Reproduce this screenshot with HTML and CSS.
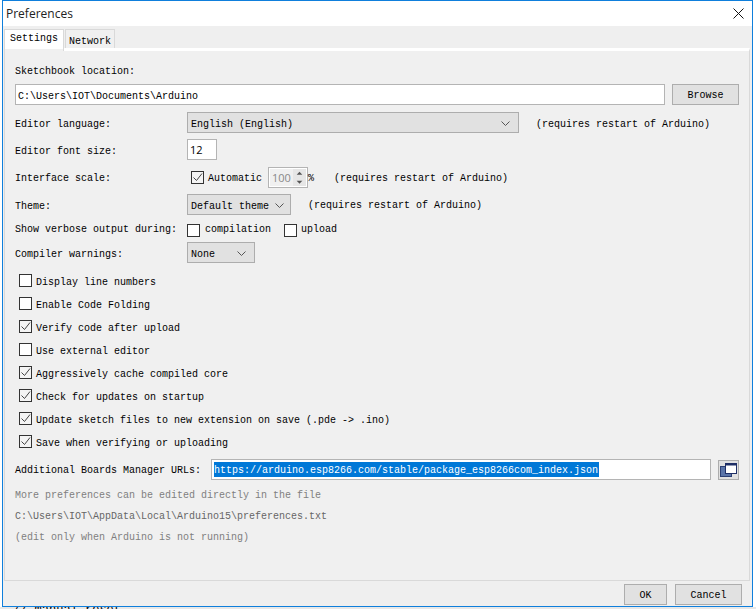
FILE: index.html
```html
<!DOCTYPE html>
<html lang="en">
<head>
<meta charset="utf-8">
<title>Preferences</title>
<link rel="stylesheet" href="styles.css">
</head>
<body>
<div class="window">
  <div class="titlebar">
    <span class="title">Preferences</span>
    <svg class="close" width="11" height="11" viewBox="0 0 11 11"><path d="M.5.5l10 10M10.500.5l-10 10" stroke="#111" stroke-width="1" fill="none"/></svg>
  </div>
  <div class="tabs">
    <div class="tab active">Settings</div>
    <div class="tab">Network</div>
  </div>
  <div class="panel">
    <div class="label sketch-label">Sketchbook location:</div>
    <div class="row sketch-row">
      <div class="field grow">C:\Users\IOT\Documents\Arduino</div>
      <div class="btn browse">Browse</div>
    </div>
    <div class="row lang-row">
      <div class="label col">Editor language:</div>
      <div class="select lang">English (English)<svg class="chev" width="9" height="5" viewBox="0 0 9 5"><path d="M.5.500l4 4 4-4" stroke="#555" fill="none"/></svg></div>
      <div class="note note-lang">(requires restart of Arduino)</div>
    </div>
    <div class="row size-row">
      <div class="label col">Editor font size:</div>
      <div class="field size">12</div>
    </div>
    <div class="row scale-row">
      <div class="label col">Interface scale:</div>
      <span class="check on scale-check"><svg width="11" height="11" viewBox="0 0 11 11"><path d="M1.500 5.500l3 3 5.500-7" stroke="#444" fill="none"/></svg></span>
      <span class="label auto">Automatic</span>
      <div class="spinner">
        <span class="spin-value">100</span>
        <span class="spin-arrows">
          <svg width="11" height="9" viewBox="0 0 11 9"><path d="M2.500 6h6l-3-3z" fill="#555"/></svg>
          <svg width="11" height="9" viewBox="0 0 11 9"><path d="M2.500 3h6l-3 3z" fill="#555"/></svg>
        </span>
      </div>
      <span class="label pct">%</span>
      <span class="note note-scale">(requires restart of Arduino)</span>
    </div>
    <div class="row theme-row">
      <div class="label col">Theme:</div>
      <div class="select theme">Default theme<svg class="chev" width="9" height="5" viewBox="0 0 9 5"><path d="M.5.500l4 4 4-4" stroke="#555" fill="none"/></svg></div>
      <div class="note note-theme">(requires restart of Arduino)</div>
    </div>
    <div class="row verbose-row">
      <div class="label col">Show verbose output during:</div>
      <span class="check"></span><span class="label comp">compilation</span>
      <span class="check"></span><span class="label upl">upload</span>
    </div>
    <div class="row warn-row">
      <div class="label col">Compiler warnings:</div>
      <div class="select warn">None<svg class="chev" width="9" height="5" viewBox="0 0 9 5"><path d="M.5.500l4 4 4-4" stroke="#555" fill="none"/></svg></div>
    </div>
    <ul class="options">
      <li><span class="check"></span><span class="opt">Display line numbers</span></li>
      <li><span class="check"></span><span class="opt">Enable Code Folding</span></li>
      <li><span class="check on"><svg width="11" height="11" viewBox="0 0 11 11"><path d="M1.500 5.500l3 3 5.500-7" stroke="#444" fill="none"/></svg></span><span class="opt">Verify code after upload</span></li>
      <li><span class="check"></span><span class="opt">Use external editor</span></li>
      <li><span class="check on"><svg width="11" height="11" viewBox="0 0 11 11"><path d="M1.500 5.500l3 3 5.500-7" stroke="#444" fill="none"/></svg></span><span class="opt">Aggressively cache compiled core</span></li>
      <li><span class="check on"><svg width="11" height="11" viewBox="0 0 11 11"><path d="M1.500 5.500l3 3 5.500-7" stroke="#444" fill="none"/></svg></span><span class="opt">Check for updates on startup</span></li>
      <li><span class="check on"><svg width="11" height="11" viewBox="0 0 11 11"><path d="M1.500 5.500l3 3 5.500-7" stroke="#444" fill="none"/></svg></span><span class="opt">Update sketch files to new extension on save (.pde -&gt; .ino)</span></li>
      <li><span class="check on"><svg width="11" height="11" viewBox="0 0 11 11"><path d="M1.500 5.500l3 3 5.500-7" stroke="#444" fill="none"/></svg></span><span class="opt">Save when verifying or uploading</span></li>
    </ul>
    <div class="row url-row">
      <div class="label url-label">Additional Boards Manager URLs:</div>
      <div class="field url grow"><span class="selected">https://arduino.esp8266.com/stable/package_esp8266com_index.json</span></div>
      <div class="btn iconbtn">
        <svg width="17" height="14" viewBox="0 0 17 14"><rect x=".5" y="3.500" width="11" height="10" fill="#5a74a8" stroke="#2c3f73"/><rect x="5.500" y=".5" width="11" height="10" fill="#fff" stroke="#1f2f66"/><path d="M5 1.500h12" stroke="#1f2f66" stroke-width="2"/></svg>
      </div>
    </div>
    <div class="hint hint-first">More preferences can be edited directly in the file</div>
    <div class="hint hint-path">C:\Users\IOT\AppData\Local\Arduino15\preferences.txt</div>
    <div class="hint hint-last">(edit only when Arduino is not running)</div>
  </div>
  <div class="footer">
    <div class="btn ok">OK</div>
    <div class="btn cancel">Cancel</div>
  </div>
</div>
<div class="behind">// manual reset</div>
</body>
</html>
```
FILE: styles.css
```css
* { box-sizing: border-box; }
html, body { margin: 0; height: 609px; overflow: hidden; }
body {
  background: #fff;
  font: 10px/14px "Liberation Mono", monospace;
  color: #000;
  padding-left: 2px;
  padding-right: 3px;
}
.window {
  height: 607px;
  border: 1px solid #0f7fdc;
  background: #efefef;
  display: flex;
  flex-direction: column;
}
.titlebar {
  height: 25px;
  flex: none;
  background: #fff;
  display: flex;
  align-items: center;
  justify-content: space-between;
  padding: 0 8px 0 3px;
}
.title { font: 12px/16px "Open Sans", sans-serif; color: #222; }
.close { display: block; }
.tabs {
  flex: none;
  height: 22px;
  padding-left: 1px;
  display: flex;
  align-items: flex-end;
  gap: 1px;
}
.tab {
  height: 19px;
  width: 50px;
  border: 1px solid #d9d9d9;
  border-bottom: 0;
  background: #f0f0f0;
  text-align: center;
  line-height: 23px;
}
.tab.active {
  height: 22px;
  width: 60px;
  border-color: #d9d9d9;
  line-height: 18px;
  margin-bottom: -3px;
  position: relative;
  z-index: 1;
  background: linear-gradient(#fff 0 19px, #f0f0f0 19px);
}
.panel {
  flex: 1;
  margin: 0 2px 0 1px;
  border: 1px solid #d9d9d9;
  border-top: 3px solid #fff;
  padding: 0 10px;
  min-height: 0;
  background: #f0f0f0;
}
.row { display: flex; align-items: center; }
.grow { flex: 1; }
.label { white-space: pre; }
.col { width: 172px; flex: none; padding-top: 4px; }
.sketch-label { margin-top: 14px; }
.sketch-row { margin-top: 5px; gap: 7px; }
.field {
  height: 21px;
  background: #fff;
  border: 1px solid #b4b4b4;
  padding: 0 2px;
  line-height: 23px;
  white-space: pre;
}
.btn {
  height: 21px;
  background: #e1e1e1;
  border: 1px solid #adadad;
  text-align: center;
  line-height: 21px;
}
.browse { width: 67px; }
.select {
  height: 21px;
  background: #e1e1e1;
  border: 1px solid #adadad;
  padding: 4px 3px 0;
  display: flex;
  align-items: center;
  justify-content: space-between;
  white-space: pre;
}
.lang-row { margin-top: 7px; }
.lang { width: 332px; }
.chev { margin: 0 5px 3px 0; flex: none; }
.note { white-space: pre; padding-top: 3px; }
.note-lang { margin-left: 17px; padding-top: 5px; }
.size-row { margin-top: 6px; }
.size { width: 30px; font: 11px/19px "Open Sans", sans-serif; }
.scale-row { margin-top: 7px; height: 21px; }
.scale-row .col, .auto, .pct, .note-scale { padding-top: 2px; }
.check {
  flex: none;
  width: 13px;
  height: 13px;
  border: 1px solid #333;
  background: #fff;
  display: inline-flex;
  align-items: center;
  justify-content: center;
}
.check.on { background: #f4f4f4; }
.check svg { display: block; }
.scale-check { margin-left: 4px; }
.auto { margin-left: 4px; }
.spinner {
  margin-left: 6px;
  width: 40px;
  height: 21px;
  border: 1px solid #b4b4b4;
  background: #fff;
  display: flex;
  padding: 1px;
}
.spin-value { flex: 1; background: #f0f0f0; font: 11px/17px "Open Sans", sans-serif; color: #888; padding-left: 2px; }
.spin-arrows { width: 13px; flex: none; background: #e6e6e6; display: flex; flex-direction: column; }
.spin-arrows svg { display: block; flex: 1; margin: 0 auto; }
.note-scale { margin-left: 20px; }
.theme-row { margin-top: 6px; }
.theme { width: 104px; }
.theme .chev { margin-right: 3px; }
.note-theme { margin-left: 17px; }
.verbose-row { margin-top: 8px; height: 14px; }
.verbose-row .col { padding-top: 0; }
.comp { margin-left: 5px; }
.verbose-row .check + .comp + .check { margin-left: 13px; }
.upl { margin-left: 4px; }
.warn-row { margin-top: 5px; }
.warn { width: 68px; }
.options { list-style: none; margin: 6px 0 0; padding: 0 0 0 4px; }
.options li {
  height: 23px;
  display: flex;
  align-items: center;
  gap: 4px;
  white-space: pre;
}
.opt { padding-top: 4px; }
.url-row { margin-top: 6px; }
.url-label { width: 196px; flex: none; padding-top: 2px; }
.url { display: flex; align-items: center; }
.selected { background: #0078d7; color: #fff; height: 15px; line-height: 17px; padding-right: 1px; }
.iconbtn {
  margin-left: 7px;
  width: 21px;
  height: 20px;
  display: flex;
  align-items: center;
  justify-content: center;
  padding: 0;
}
.iconbtn svg { display: block; }
.hint { color: #7f7f7f; white-space: pre; height: 21px; line-height: 21px; }
.hint-first { margin-top: 5px; }
.hint-path { color: #666; }
.footer {
  flex: none;
  height: 25px;
  display: flex;
  justify-content: flex-end;
  align-items: center;
  gap: 8px;
  padding: 2px 10px 0 0;
}
.ok { width: 43px; }
.cancel { width: 67px; }
.behind {
  height: 2px;
  overflow: hidden;
  background: #e8e8e8;
  font-size: 12px;
  line-height: 6px;
  padding-left: 13px;
  margin-left: -2px;
  margin-right: -3px;
}
```
